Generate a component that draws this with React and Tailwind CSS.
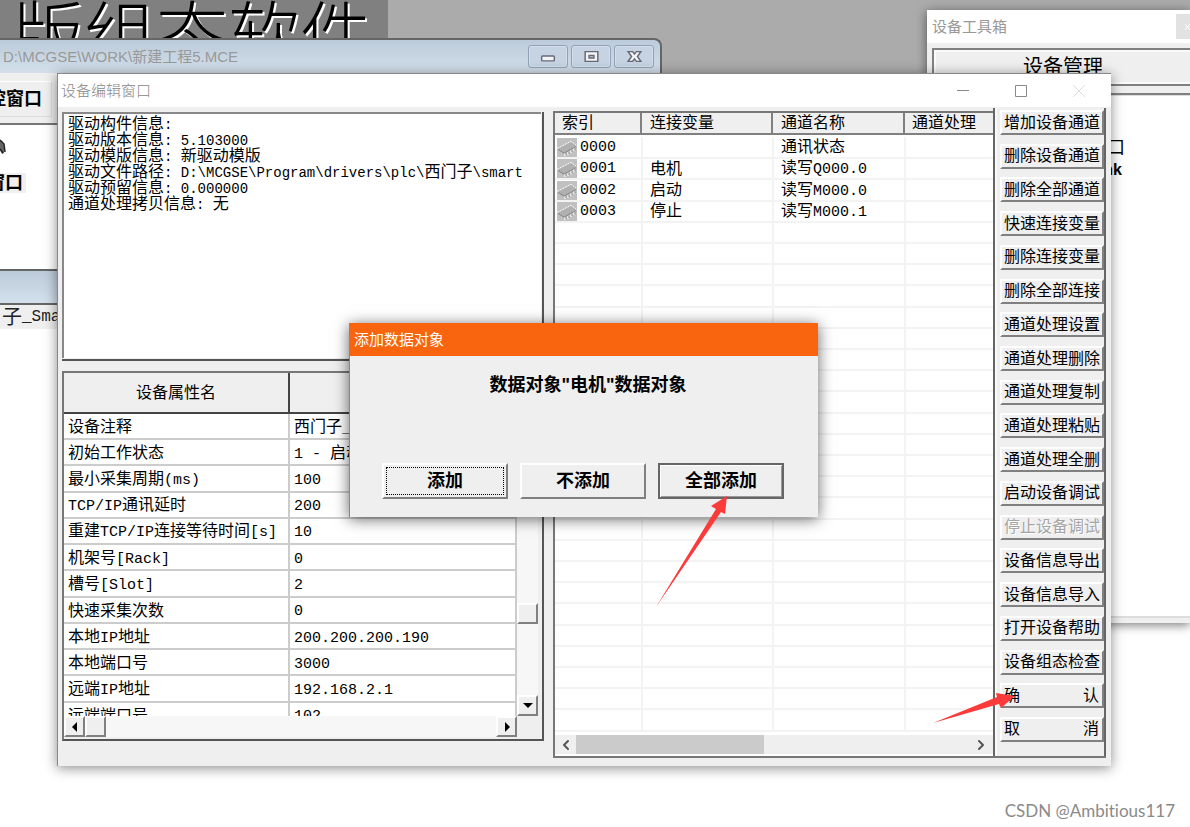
import clsx from "clsx";
import { ChevronLeft, ChevronRight } from "lucide-react";

const driverInfo = [
    "驱动构件信息: ",
    "驱动版本信息: 5.103000",
    "驱动模版信息: 新驱动模版",
    "驱动文件路径: D:\\MCGSE\\Program\\drivers\\plc\\西门子\\smart",
    "驱动预留信息: 0.000000",
    "通道处理拷贝信息: 无",
];

const properties = [
    ["设备注释", "西门子_Smart200"],
    ["初始工作状态", "1 - 启动"],
    ["最小采集周期(ms)", "100"],
    ["TCP/IP通讯延时", "200"],
    ["重建TCP/IP连接等待时间[s]", "10"],
    ["机架号[Rack]", "0"],
    ["槽号[Slot]", "2"],
    ["快速采集次数", "0"],
    ["本地IP地址", "200.200.200.190"],
    ["本地端口号", "3000"],
    ["远端IP地址", "192.168.2.1"],
    ["远端端口号", "102"],
];

const channels = [
    { index: "0000", variable: "", name: "通讯状态" },
    { index: "0001", variable: "电机", name: "读写Q000.0" },
    { index: "0002", variable: "启动", name: "读写M000.0" },
    { index: "0003", variable: "停止", name: "读写M000.1" },
];

const actions = [
    "增加设备通道",
    "删除设备通道",
    "删除全部通道",
    "快速连接变量",
    "删除连接变量",
    "删除全部连接",
    "通道处理设置",
    "通道处理删除",
    "通道处理复制",
    "通道处理粘贴",
    "通道处理全删",
    "启动设备调试",
    "停止设备调试",
    "设备信息导出",
    "设备信息导入",
    "打开设备帮助",
    "设备组态检查",
    "确认",
    "取消",
];

const TOTAL_ROWS = 28;

const raised =
    "border-t-2 border-l-2 border-r-2 border-b-2 border-t-white border-l-white border-r-[#808080] border-b-[#808080] bg-[#efefef]";

// Latin runs are set in a monospace face next to the CJK glyphs
function Mixed({ text, compact = false }) {
    return text.split(/([\x20-\x7e]+)/).map((part, i) =>
        /^[\x20-\x7e]+$/.test(part) ? (
            <span
                key={i}
                className={clsx(
                    "font-['Liberation_Mono',monospace] leading-none",
                    compact ? "text-[14px]" : "text-[15px]"
                )}
            >
                {part}
            </span>
        ) : (
            part
        )
    );
}

export default function App() {
    return (
        <main className="relative min-h-screen overflow-hidden bg-white font-['Liberation_Sans','Noto_Sans_CJK_SC',sans-serif] text-base leading-none whitespace-nowrap text-black">
            <Banner />
            <ProjectWindow />
            <ToolboxWindow />
            <EditorWindow />
            <AddObjectDialog />
            <Pointers />
            <p className="absolute right-[15px] bottom-1 font-['Lato',sans-serif] text-[17px] leading-6 text-[#8a8a8a] [font-variant-ligatures:none]">
                CSDN @Ambitious117
            </p>
        </main>
    );
}

function Banner() {
    return (
        <header className="h-24 overflow-hidden bg-[#ababab]">
            <h1 className="h-[38px] w-[388px] overflow-hidden bg-[#808080] pl-3 text-[72px] leading-[72px] font-light text-black [text-shadow:2px_2px_0_#fff]">
                版组态软件
            </h1>
        </header>
    );
}

function ProjectWindow() {
    return (
        <section className="absolute top-[38px] bottom-0 left-0 w-[662px]">
            <div className="flex h-[35px] items-center rounded-tr-lg border-t-2 border-r-2 border-[#666] bg-linear-to-b from-[#bccbda] to-[#d3e0ec] pr-1.5 pl-[3px]">
                <h2 className="flex-1 text-[15px] text-[#999]">D:\MCGSE\WORK\新建工程5.MCE</h2>
                <div className="flex gap-[3px]">
                    <CaptionButton label="最小化">
                        <rect x="13" y="10" width="13" height="5" rx="1" />
                    </CaptionButton>
                    <CaptionButton label="最大化">
                        <path d="M13.500 5.500h13v10h-13z M17.500 9.500v2.500h5v-2.500z" fillRule="evenodd" />
                    </CaptionButton>
                    <CaptionButton label="关闭">
                        <path d="M13.500 5.500h4.500l2 2.500 2-2.500h4.500l-3.500 5 3.500 5h-4.500l-2-2.500-2 2.500h-4.500l3.500-5z" />
                    </CaptionButton>
                </div>
            </div>
            <div className="h-[52px] w-[60px] border-b-2 border-[#777] bg-[#efefef] pt-2">
                <button className="flex h-[36px] w-[52px] items-center justify-end border border-l-0 border-white border-r-[#ddd] border-b-[#ddd] pr-[9px] text-lg font-bold">
                    控窗口
                </button>
            </div>
            <div className="h-[144px] w-[60px] overflow-hidden pt-[14px]">
                <svg className="h-[18px] w-1.5" viewBox="0 0 6 18">
                    <path d="M0 1l3 2 2 6-1 5-2 1-2-4z" fill="#666" />
                    <path d="M0 1l4 4 1 8M0 10l3 4" fill="none" stroke="#222" strokeWidth="1.5" />
                </svg>
                <p className="mt-4 flex h-5 w-[26px] items-center justify-end bg-[#efefef] pr-[3px] text-lg font-bold">窗口</p>
            </div>
            <div className="h-9 w-[60px] border-t-2 border-b-2 border-[#666] bg-linear-to-b from-[#bccbda] to-[#d3e0ec]" />
            <p className="flex h-6 w-[60px] items-center overflow-hidden bg-[#efefef] pl-0.5 text-[#222]">
                <span className="text-xl">子</span>
                <span className="font-['Liberation_Mono',monospace] text-base">_Smart</span>
            </p>
        </section>
    );
}

function CaptionButton({ label, children }) {
    return (
        <button
            aria-label={label}
            className="h-[23px] w-10 rounded-[3px] border border-[#93a1b8] bg-[#c5d3e3] shadow-[inset_0_0_0_1px_#d3dfeb]"
        >
            <svg className="-mt-px h-[21px] w-[38px]" viewBox="0 0 39 21" fill="#f4f4f4" stroke="#666a78" strokeWidth="1.5">
                {children}
            </svg>
        </button>
    );
}

function ToolboxWindow() {
    return (
        <section className="absolute top-2.5 right-0 flex h-[613px] w-[263px] flex-col bg-[#efefef] shadow-[0_2px_10px_#0008]">
            <div className="flex h-[33px] items-center justify-between bg-white pl-[5px] text-[15px] text-[#999]">
                <h2>设备工具箱</h2>
                <button aria-label="关闭" className="flex h-[25px] w-3.5 items-center justify-end bg-[#e2e2e2]">
                    <svg className="h-1.5 w-[5px]" viewBox="0 0 5 6" fill="none" stroke="#fff">
                        <path d="M0 0l5 6M0 6l5-6" />
                    </svg>
                </button>
            </div>
            <div className="mt-[5px] ml-[5px] border-t-2 border-b-2 border-l-2 border-[#808080]">
                <button className="flex h-[34px] w-full items-center justify-center border-2 border-r-0 border-[#fafafa] text-xl">
                    设备管理
                </button>
            </div>
            <div className="mt-[7px] ml-[5px] flex-1 border-t-2 border-l-2 border-[#808080] bg-white pt-[42px] pr-[65px] text-right shadow-[inset_0_1px_0_#ddd]">
                <p className="text-lg leading-[22px]">口</p>
                <p className="pr-[3px] text-base leading-[22px] font-bold">nk</p>
            </div>
            <div className="h-[7px] border-t-2 border-[#ddd]" />
        </section>
    );
}

function EditorWindow() {
    return (
        <section className="absolute top-[73px] left-[57px] flex h-[693px] w-[1054px] flex-col border-t border-l border-[#888] bg-[#efefef] shadow-[0_2px_12px_#0007]">
            <div className="flex h-[33px] shrink-0 items-center bg-white pr-[3px] pl-[3px] text-[#888]">
                <h2 className="flex-1 text-[15px] font-light">设备编辑窗口</h2>
                <WindowButton label="最小化">
                    <path d="M0 5.500h12" />
                </WindowButton>
                <WindowButton label="最大化">
                    <path d="M.5 .5h11v11h-11z" />
                </WindowButton>
                <WindowButton label="关闭" faint>
                    <path d="M0 0l12 12M12 0L0 12" />
                </WindowButton>
            </div>
            <div className="flex flex-1 pr-[5px] pb-2 pl-1">
                <div className="flex w-[482px] flex-col pt-[5px]">
                    <DriverInfo />
                    <PropertyPanel />
                </div>
                <div className="ml-[9px] flex flex-1 border-b-2 border-[#777]">
                    <ChannelList />
                    <ActionBar />
                </div>
            </div>
        </section>
    );
}

function WindowButton({ label, faint = false, children }) {
    return (
        <button aria-label={label} className="flex h-full w-[58px] items-center justify-center">
            <svg
                className={clsx("size-3", faint ? "text-[#ddd]" : "text-[#888]")}
                viewBox="0 0 12 12"
                fill="none"
                stroke="currentColor"
            >
                {children}
            </svg>
        </button>
    );
}

function DriverInfo() {
    return (
        <div className="h-[249px] border-r-2 border-b-2 border-[#555] pr-px pb-px">
            <div className="h-full overflow-hidden border-t-2 border-l-2 border-[#888] bg-white pt-0.5 pl-1">
                {driverInfo.map((line) => (
                    <p key={line} className="h-4 leading-4 whitespace-pre">
                        <Mixed text={line} compact />
                    </p>
                ))}
            </div>
        </div>
    );
}

function PropertyPanel() {
    return (
        <div className="mt-2.5 flex h-[370px] flex-col border-2 border-[#555] border-t-[#777] border-l-[#777] pb-0.5">
            <div className="mr-1 flex min-h-0 flex-1">
                <div className="flex-1 overflow-hidden">
                    <table className="w-full table-fixed border-collapse">
                        <thead>
                            <tr className="h-10">
                                <th className="w-[225px] border-r-2 border-b-2 border-[#444] font-normal">设备属性名</th>
                                <th className="border-b-2 border-[#444] font-normal">设备属性值</th>
                            </tr>
                        </thead>
                    </table>
                    <table className="h-[315px] w-full table-fixed border-collapse bg-white">
                        <tbody>
                            {properties.map(([name, value]) => (
                                <tr key={name}>
                                    <td className="w-[225px] border-r-2 border-b-2 border-[#ccc] p-0 pt-0.5 pl-1">
                                        <Mixed text={name} />
                                    </td>
                                    <td className="border-r-2 border-b-2 border-[#ccc] p-0 pt-0.5 pl-1">
                                        <Mixed text={value} />
                                    </td>
                                </tr>
                            ))}
                        </tbody>
                    </table>
                </div>
                <div className="flex w-[21px] flex-col bg-[#f7f7f7]">
                    <div className="flex-1" />
                    <div className={clsx("h-[21px]", raised)} />
                    <div className="h-[71px]" />
                    <ArrowButton label="向下滚动" path="M1 3h10L6 8z" />
                </div>
            </div>
            <div className="mr-1 flex h-[21px] bg-[#f7f7f7]">
                <ArrowButton label="向左滚动" path="M8 1v10L3 6z" />
                <div className={clsx("w-[21px]", raised)} />
                <div className="flex-1" />
                <ArrowButton label="向右滚动" path="M4 1v10l5-5z" />
                <div className="w-[21px] bg-[#efefef]" />
            </div>
        </div>
    );
}

function ArrowButton({ label, path }) {
    return (
        <button aria-label={label} className={clsx("flex h-[21px] w-[21px] items-center justify-center", raised)}>
            <svg className="size-3" viewBox="0 0 12 12">
                <path d={path} />
            </svg>
        </button>
    );
}

function ChannelList() {
    const rows = Array.from({ length: TOTAL_ROWS }, (_, i) => channels[i] || { index: "", variable: "", name: "" });

    return (
        <div className="mt-1 flex w-[440px] flex-col border-t-2 border-l-2 border-[#777] bg-white">
            <table className="w-full table-fixed border-collapse bg-[#efefef]">
                <thead>
                    <tr className="h-[21px] text-left">
                        <th className="w-[86px] border-r-2 border-b-2 border-[#808080] p-0 pl-[7px] font-normal">索引</th>
                        <th className="w-[131px] border-r-2 border-b-2 border-[#808080] p-0 pl-2 font-normal">连接变量</th>
                        <th className="w-[132px] border-r-2 border-b-2 border-[#808080] p-0 pl-2 font-normal">通道名称</th>
                        <th className="border-b-2 border-[#808080] p-0 pl-[7px] font-normal">通道处理</th>
                    </tr>
                </thead>
            </table>
            <table className="mt-0.5 h-[595px] w-full table-fixed border-collapse">
                <tbody>
                    {rows.map((row, i) => (
                        <tr key={i} className="h-[21px] border-b-2 border-[#f3f3f3]">
                            <td className="w-[87px] border-r-2 border-[#f3f3f3] p-0">
                                {row.index && (
                                    <span className="flex h-[19px] items-center gap-[3px] pl-0.5">
                                        <ChipIcon />
                                        <Mixed text={row.index} />
                                    </span>
                                )}
                            </td>
                            <td className="w-[131px] border-r-2 border-[#f3f3f3] p-0 pl-[7px]">
                                <Mixed text={row.variable} />
                            </td>
                            <td className="w-[132px] border-r-2 border-[#f3f3f3] p-0 pl-[7px]">
                                <Mixed text={row.name} />
                            </td>
                            <td className="p-0" />
                        </tr>
                    ))}
                </tbody>
            </table>
            <div className="mt-auto mb-0.5 flex h-[19px] items-center bg-[#efefef] text-[#555]">
                <button aria-label="向左滚动" className="flex w-[21px] justify-center">
                    <ChevronLeft className="size-4" strokeWidth={3} />
                </button>
                <div className="h-full w-[188px] bg-[#cbcbcb]" />
                <div className="flex-1" />
                <button aria-label="向右滚动" className="flex w-6 justify-center">
                    <ChevronRight className="size-4" strokeWidth={3} />
                </button>
            </div>
        </div>
    );
}

function ChipIcon() {
    return (
        <svg className="h-[19px] w-5 shrink-0" viewBox="0 0 20 20" preserveAspectRatio="none">
            <path fill="#c0c0c0" d="M0 0h20v20H0z" />
            <path fill="#b0b0b0" d="M1 11L14 4l5 4-12 8z" />
            <path fill="none" stroke="#fff" d="M0 11L14 3.500l5 4" strokeDasharray="2 1" />
            <path fill="none" stroke="#808080" d="M1 12l6 4 12-7" />
            <path fill="none" stroke="#fff" strokeWidth="1.2" d="M8 16v3M11 15v3M14 13v3M17 11v3" />
            <path fill="none" stroke="#888" d="M9 16v2M12 15v2M15 13v2M18 11v2" />
        </svg>
    );
}

function ActionBar() {
    return (
        <aside className="mt-px flex-1 border-r-2 border-l-2 border-[#666] pt-0.5 pb-3.5 pl-[5px] shadow-[inset_2px_0_0_#fafafa]">
            <div className="flex h-full flex-col justify-between">
                {actions.map((label) => (
                    <button
                        key={label}
                        disabled={label === "停止设备调试"}
                        className={clsx(
                            "flex h-[25px] items-center justify-between pl-0.5 disabled:text-[#a5a5a5] disabled:[text-shadow:1px_1px_0_#fff]",
                            raised,
                            label.length === 2 && "px-[3px]"
                        )}
                    >
                        {label.length === 2 ? label.split("").map((char) => <span key={char}>{char}</span>) : label}
                    </button>
                ))}
            </div>
        </aside>
    );
}

function AddObjectDialog() {
    return (
        <section
            role="dialog"
            aria-labelledby="dialog-title"
            className="absolute top-[323px] left-[349px] flex h-[194px] w-[469px] flex-col border-l border-[#f9640f] bg-[#efefef] shadow-[0_2px_14px_#0009]"
        >
            <h2 id="dialog-title" className="flex h-[33px] items-center bg-[#f9640f] pl-1 text-[15px] text-white">
                添加数据对象
            </h2>
            <p className="mt-[19px] pl-2 text-center text-lg leading-5 font-bold">数据对象"电机"数据对象</p>
            <div className="mt-auto mb-[18px] flex justify-center gap-3 pr-0.5 text-lg font-bold">
                <button className={clsx("h-9 w-[126px] p-0.5", raised)}>
                    <span className="flex h-full items-center justify-center border border-dotted border-black">添加</span>
                </button>
                <button className={clsx("h-9 w-[126px]", raised)}>不添加</button>
                <button className="h-9 w-[126px] border-2 border-[#666] bg-[#efefef] shadow-[inset_1px_1px_0_#fff,inset_-1px_-1px_0_#999]">
                    全部添加
                </button>
            </div>
        </section>
    );
}

function Pointers() {
    return (
        <>
            <svg className="absolute top-[495px] left-[655px] h-[113px] w-[74px]" viewBox="0 0 74 113" fill="#fb3a3a">
                <path d="M1 112L61 14l-5-3L72 1l-2 18-4-2z" />
            </svg>
            <svg className="absolute top-[692px] left-[932px] h-[33px] w-[84px]" viewBox="0 0 84 33" fill="#fb3a3a">
                <path d="M1 31L65 5l-1-4 19 3-14 12-2-4z" />
            </svg>
        </>
    );
}
